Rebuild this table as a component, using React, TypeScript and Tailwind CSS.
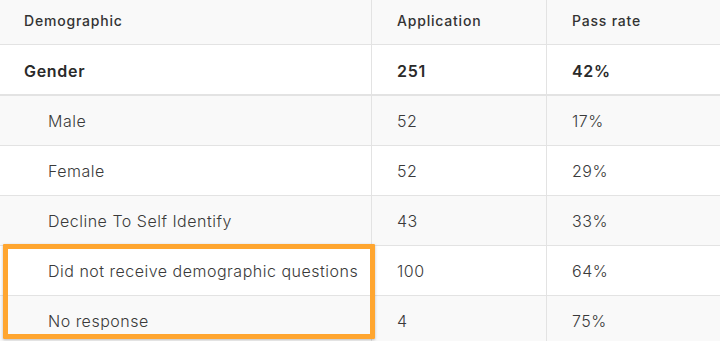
import React from "react";

const rows = [
  { label: "Male", app: "52", rate: "17%" },
  { label: "Female", app: "52", rate: "29%" },
  { label: "Decline To Self Identify", app: "43", rate: "33%" },
  { label: "Did not receive demographic questions", app: "100", rate: "64%" },
  { label: "No response", app: "4", rate: "75%" },
];

export default function App() {
  return (
    <div
      className="relative w-[720px] h-[341px] overflow-hidden bg-white text-[#333]"
      style={{ fontFamily: 'Inter, "Liberation Sans", Arial, sans-serif' }}
    >
      <div className="grid grid-cols-[372px_175px_173px]">
        <div className="h-[45px] pb-[3px] bg-[#f9f9f9] border-b border-r border-[#e3e3e3] pl-6 flex items-center text-[14px] tracking-[0.8px] font-medium text-[#333]">
          Demographic
        </div>
        <div className="h-[45px] pb-[3px] bg-[#f9f9f9] border-b border-r border-[#e3e3e3] pl-[25px] flex items-center text-[14px] tracking-[0.8px] font-medium text-[#333]">
          Application
        </div>
        <div className="h-[45px] pb-[3px] bg-[#f9f9f9] border-b border-[#e3e3e3] pl-[25px] flex items-center text-[14px] tracking-[0.8px] font-medium text-[#333]">
          Pass rate
        </div>

        <div className="h-[51px] pt-[2px] bg-white border-b-2 border-r border-[#e3e3e3] pl-6 flex items-center text-[16px] tracking-[0.7px] font-semibold text-[#2a2a2a]">
          Gender
        </div>
        <div className="h-[51px] pt-[2px] bg-white border-b-2 border-r border-[#e3e3e3] pl-[25px] flex items-center text-[16px] tracking-[0.7px] font-semibold text-[#2a2a2a]">
          251
        </div>
        <div className="h-[51px] pt-[2px] bg-white border-b-2 border-[#e3e3e3] pl-[25px] flex items-center text-[16px] tracking-[0.7px] font-semibold text-[#2a2a2a]">
          42%
        </div>

        {rows.map((r, i) => {
          const bg = i % 2 === 0 ? "bg-[#f9f9f9]" : "bg-white";
          return (
            <React.Fragment key={r.label}>
              <div className={`h-[50px] pt-[1px] ${bg} border-b border-r border-[#e3e3e3] pl-12 flex items-center text-[16px] tracking-[0.5px] font-light text-[#3a3a3a]`}>
                {r.label}
              </div>
              <div className={`h-[50px] pt-[1px] ${bg} border-b border-r border-[#e3e3e3] pl-[25px] flex items-center text-[16px] tracking-[0.5px] font-light text-[#3a3a3a]`}>
                {r.app}
              </div>
              <div className={`h-[50px] pt-[1px] ${bg} border-b border-[#e3e3e3] pl-[25px] flex items-center text-[16px] tracking-[0.5px] font-light text-[#3a3a3a]`}>
                {r.rate}
              </div>
            </React.Fragment>
          );
        })}
      </div>
      <div className="absolute left-[3px] top-[244px] w-[372px] h-[95px] border-[5px] border-[#ffa630] rounded-[1px] shadow-[0_1px_3px_rgba(0,0,0,0.25)]" />
    </div>
  );
}
